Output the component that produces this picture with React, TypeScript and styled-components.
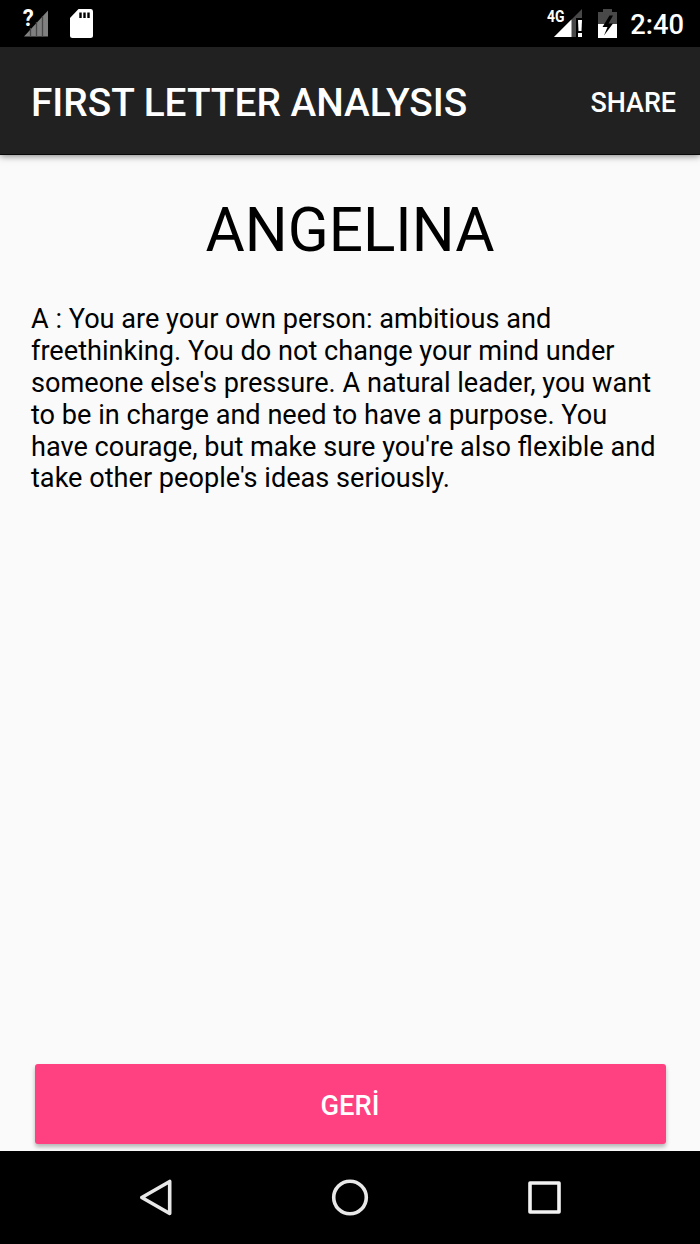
import React from "react";
import styled, { createGlobalStyle } from "styled-components";

const Global = createGlobalStyle`
  * { box-sizing: border-box; }
  body { margin: 0; background: #fafafa; font-family: Roboto, "Noto Sans", sans-serif; }
`;

const Screen = styled.div`
  display: flex;
  flex-direction: column;
  width: 700px;
  height: 1244px;
  overflow: hidden;
  background: #fafafa;
`;

const StatusBar = styled.header`
  display: flex;
  justify-content: space-between;
  height: 47px;
  background: #000;
  flex: none;
`;

const StatusText = styled.time`
  color: #fff;
  font-size: 27.3px;
  line-height: 51px;
  font-weight: 500;
  margin-right: 16px;
`;

const StatusGroup = styled.div`
  display: flex;
`;

const AppBar = styled.div`
  display: flex;
  align-items: center;
  justify-content: space-between;
  height: 108px;
  padding: 3px 24px 0 31px;
  background: #212121;
  border-bottom: 1px solid #080808;
  color: #fff;
  flex: none;
  box-shadow: 0 1px 7px rgba(0, 0, 0, 0.5);
`;

const Title = styled.h1`
  margin: 0;
  font-size: 38.8px;
  font-weight: 500;
`;

const Action = styled.button`
  border: 0;
  padding: 2px 0 0;
  background: none;
  color: #fff;
  font: 500 26.9px Roboto, sans-serif;
`;

const Content = styled.main`
  display: flex;
  flex-direction: column;
  flex: 1;
  padding: 39px 31px 7px;
  color: #000;
`;

const Name = styled.h2`
  margin: 0;
  font-size: 60.2px;
  line-height: 74px;
  font-weight: 400;
  text-align: center;
`;

const Reading = styled.p`
  margin: 36.400px 0 0;
  font-size: 27.13px;
  line-height: 31.8px;
  white-space: nowrap;
`;

const BackButton = styled.button`
  margin: auto 3.5px 0;
  height: 80px;
  padding: 3px 0 0;
  border: 0;
  border-radius: 3px;
  background: #ff4081;
  color: #fff;
  font: 500 27.3px Roboto, sans-serif;
  box-shadow: 0 3px 4px rgba(0, 0, 0, 0.28);
`;

const NavBar = styled.nav`
  display: flex;
  height: 93px;
  background: #000;
  flex: none;
`;

const IconLabel = styled.text<{ $size: number }>`
  font-family: Roboto, sans-serif;
  font-weight: 700;
  font-size: ${(p) => p.$size}px;
  fill: #fff;
`;

function NotificationIcons() {
  return (
    <svg width="120" height="47">
      <path d="M24 36.500L48 10.500V36.500Z" fill="#808080" />
      <path d="M30.500 28V37M36.500 22V37M42.500 16V37" stroke="#484848" strokeWidth="1.300" />
      <path d="M21 8H35V22L30 28H21Z" fill="#000" />
      <IconLabel $size={23} x="22.800" y="26" textLength="11" lengthAdjust="spacingAndGlyphs">?</IconLabel>
      <path d="M78.500 9H91Q93 9 93 11.500V35.500Q93 38 90.500 38H72.500Q70 38 70 35.500V18Z" fill="#fff" />
      <path d="M80.500 12.500V18M84.500 12.500V18M88.500 12.500V18" stroke="#000" strokeWidth="2.400" />
    </svg>
  );
}

function SystemIcons() {
  return (
    <svg width="90" height="47" viewBox="540 0 90 47">
      <path d="M554 37L582 9V18H576V37Z" fill="#484848" />
      <path d="M554 37L571.500 19.500V37Z" fill="#fff" />
      <path d="M545 8H565V22H545Z" fill="#000" />
      <IconLabel $size={17} x="547" y="22" textLength="17.500" lengthAdjust="spacingAndGlyphs">4G</IconLabel>
      <path d="M578 20H582L581.500 31H578.500Z" fill="#fff" />
      <rect x="578" y="33" width="4" height="4" fill="#fff" />
      <path d="M603 9H612V12H617V24H598V12H603Z" fill="#484848" />
      <path d="M598 24H617V38H598Z" fill="#fff" />
      <path d="M609.500 15.500L602.500 27H607.500L604 35.500L613 23.500H608.500L613 15.500Z" fill="#000" />
    </svg>
  );
}

export default function App() {
  return (
    <Screen>
      <Global />
      <StatusBar>
        <NotificationIcons />
        <StatusGroup>
          <SystemIcons />
          <StatusText>2:40</StatusText>
        </StatusGroup>
      </StatusBar>
      <AppBar>
        <Title>FIRST LETTER ANALYSIS</Title>
        <Action>SHARE</Action>
      </AppBar>
      <Content>
        <Name>ANGELINA</Name>
        <Reading>
          A : You are your own person: ambitious and<br />
          freethinking. You do not change your mind under<br />
          someone else's pressure. A natural leader, you want<br />
          to be in charge and need to have a purpose. You<br />
          have courage, but make sure you're also flexible and<br />
          take other people's ideas seriously.
        </Reading>
        <BackButton>GERİ</BackButton>
      </Content>
      <NavBar>
        <svg width="700" height="93" fill="none" stroke="#e8e8e8" strokeWidth="3.600" strokeLinejoin="round">
          <path d="M141.800 46.500L169.700 30.500V62.500Z" />
          <circle cx="350" cy="46.500" r="16.300" />
          <rect x="530" y="32" width="29" height="29" stroke="#f2f2f2" />
        </svg>
      </NavBar>
    </Screen>
  );
}
